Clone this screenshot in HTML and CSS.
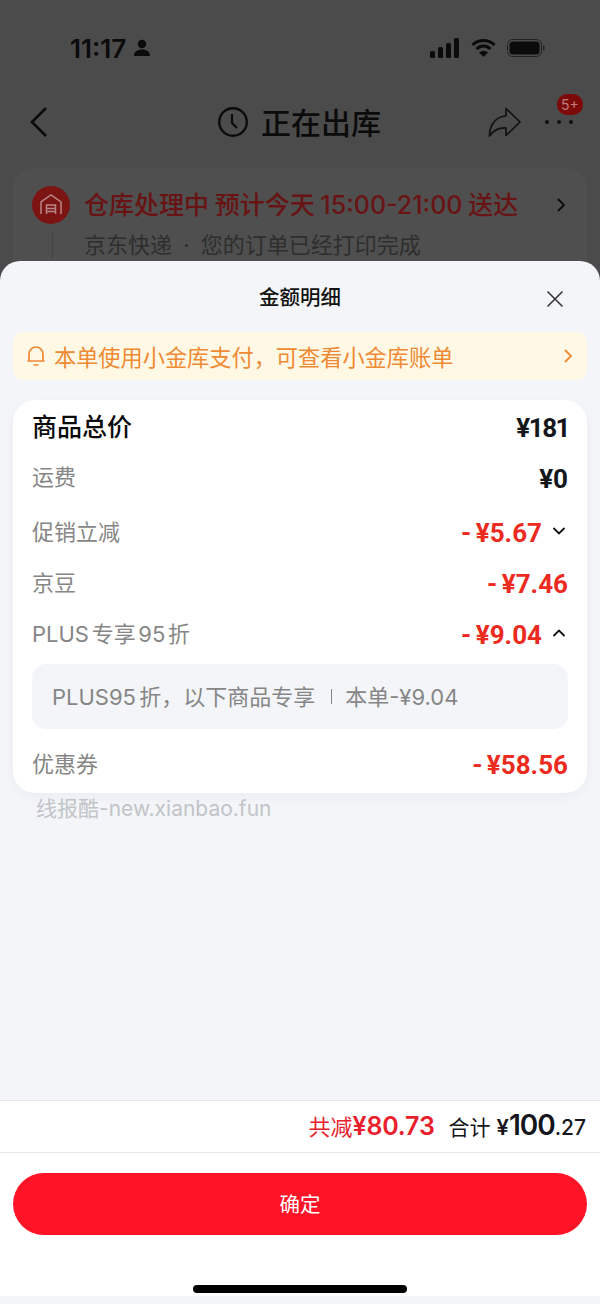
FILE: index.html
```html
<!DOCTYPE html>
<html>

    <head>
        <title>金额明细</title>
        <meta charset="utf-8">
        <link rel="stylesheet" href="styles.css">
    </head>

    <body>
        <div class="backdrop">
            <div class="status-bar">
                <div class="status-left">
                    <span class="time">11:17</span>
                    <svg class="person" width="18" height="18" viewBox="0 0 18 18">
                        <circle cx="9" cy="5" r="4.200" fill="#0b0b0b"/>
                        <path d="M1 17c0-4.600 3.400-6.600 8-6.600s8 2 8 6.600z" fill="#0b0b0b"/>
                    </svg>
                </div>
                <div class="status-right">
                    <svg width="30" height="20" viewBox="0 0 30 20">
                        <rect x="0" y="13" width="5" height="7" rx="1.500" fill="#0b0b0b"/>
                        <rect x="8" y="9" width="5" height="11" rx="1.500" fill="#0b0b0b"/>
                        <rect x="16" y="5" width="5" height="15" rx="1.500" fill="#0b0b0b"/>
                        <rect x="24" y="0" width="5" height="20" rx="1.500" fill="#0b0b0b"/>
                    </svg>
                    <svg width="25" height="20" viewBox="0 0 24 20">
                        <path d="M1 7c6-6 16-6 22 0M5 11c4-4 10-4 14 0" fill="none" stroke="#0b0b0b" stroke-width="3"/>
                        <path d="M12 19l-4.500-4.500c2.500-2 6.500-2 9 0z" fill="#0b0b0b"/>
                    </svg>
                    <svg width="39" height="20" viewBox="0 0 39 20">
                        <rect x="0.500" y="1.500" width="34" height="17" rx="5" fill="none" stroke="#222"/>
                        <rect x="2.500" y="3.500" width="30" height="13" rx="3.500" fill="#0b0b0b"/>
                        <rect x="36" y="7.500" width="1.500" height="5" rx="0.700" fill="#222"/>
                    </svg>
                </div>
            </div>

            <div class="nav">
                <svg class="nav-back" width="20" height="32" viewBox="0 0 20 32">
                    <path d="M17 2L3 16l14 14" fill="none" stroke="#0b0b0b" stroke-width="2.600"/>
                </svg>
                <div class="nav-title">
                    <svg width="32" height="32" viewBox="0 0 32 32">
                        <circle cx="16" cy="16" r="13.800" fill="none" stroke="#0b0b0b" stroke-width="2.400"/>
                        <path d="M15 8v9l5 5" fill="none" stroke="#0b0b0b" stroke-width="2.200"/>
                    </svg>
                    <span>正在出库</span>
                </div>
                <div class="nav-actions">
                    <svg width="34" height="30" viewBox="0 0 34 30">
                        <path d="M18 1.500L32 15 18 28.500V21C11 20.500 5.500 23.500 1.500 29 1.500 18 8 9.500 18 9z" fill="none" stroke="#111" stroke-width="1.700" stroke-linejoin="round"/>
                    </svg>
                    <div class="more">
                        <span class="more-dots"><i></i><i></i><i></i></span>
                        <span class="badge">5+</span>
                    </div>
                </div>
            </div>

            <div class="track-card">
                <div class="track-head">
                    <span class="track-icon">
                        <svg width="26" height="26" viewBox="0 0 26 26">
                            <path d="M3 22V10L13 3l10 7v12M8.500 22v-9h9v9M9 16.500h8M9 19.500h8" fill="none" stroke="#b98686" stroke-width="1.500"/>
                        </svg>
                    </span>
                    <span class="track-title">仓库处理中 预计今天 15:00-21:00 送达</span>
                    <svg class="track-arrow" width="10" height="16" viewBox="0 0 10 16">
                        <path d="M2 2l6 6-6 6" fill="none" stroke="#0b0b0b" stroke-width="1.800"/>
                    </svg>
                </div>
                <div class="track-sub">京东快递 · 您的订单已经打印完成</div>
            </div>
        </div>

        <div class="sheet">
            <div class="sheet-head">
                <span class="sheet-title">金额明细</span>
                <svg class="sheet-close" width="20" height="20" viewBox="0 0 20 20">
                    <path d="M2.500 2.500l15 15M17.500 2.500l-15 15" fill="none" stroke="#333" stroke-width="1.500"/>
                </svg>
            </div>

            <div class="notice">
                <svg width="20" height="22" viewBox="0 0 20 22">
                    <path d="M3 16V9a7 7 0 0 1 14 0v7zM1.500 16h17M7.500 20h5" fill="none" stroke="#ee8a33" stroke-width="1.700" stroke-linejoin="round"/>
                </svg>
                <span class="notice-text">本单使用小金库支付，可查看小金库账单</span>
                <svg class="notice-arrow" width="10" height="16" viewBox="0 0 10 16">
                    <path d="M2 2l6 6-6 6" fill="none" stroke="#ee8a33" stroke-width="1.800"/>
                </svg>
            </div>

            <div class="detail-card">
                <div class="row row-total">
                    <span class="row-name">商品总价</span>
                    <span class="row-amount">¥181</span>
                </div>
                <div class="row row-freight">
                    <span class="row-name">运费</span>
                    <span class="row-amount">¥0</span>
                </div>
                <div class="row row-promo">
                    <span class="row-name">促销立减</span>
                    <span class="row-amount minus">- ¥5.67</span>
                    <svg class="row-toggle" width="14" height="10" viewBox="0 0 14 10">
                        <path d="M1.500 2l5.500 5.500L12.500 2" fill="none" stroke="#111" stroke-width="1.800"/>
                    </svg>
                </div>
                <div class="row">
                    <span class="row-name">京豆</span>
                    <span class="row-amount minus">- ¥7.46</span>
                </div>
                <div class="row">
                    <span class="row-name row-plus">PLUS 专享 95 折</span>
                    <span class="row-amount minus">- ¥9.04</span>
                    <svg class="row-toggle" width="14" height="10" viewBox="0 0 14 10">
                        <path d="M1.500 8L7 2.500 12.500 8" fill="none" stroke="#111" stroke-width="1.800"/>
                    </svg>
                </div>
                <div class="row-extra">
                    <span class="extra-name">PLUS95 折，以下商品专享</span>
                    <i class="extra-sep"></i>
                    <span>本单-¥9.04</span>
                </div>
                <div class="row row-coupon">
                    <span class="row-name">优惠券</span>
                    <span class="row-amount minus">- ¥58.56</span>
                </div>
            </div>

            <div class="watermark">线报酷-new.xianbao.fun</div>

            <div class="summary">
                <span class="saved">共减<b>¥80.73</b></span>
                <span class="total">合计 <em>¥</em><b>100</b><small>.27</small></span>
            </div>

            <div class="footer">
                <button class="confirm">确定</button>
                <div class="home-bar"></div>
            </div>
        </div>
    </body>

</html>
```

FILE: styles.css
```css
* {
    box-sizing: border-box;
}

html,
body {
    margin: 0;
    padding: 0;
}

body {
    width: 600px;
    height: 1304px;
    overflow: hidden;
    background: #4b4b4b;
    font-family: Inter, "Noto Sans CJK SC", sans-serif;
}

/* dimmed order page behind the sheet */
.backdrop {
    height: 261px;
    overflow: hidden;
    color: #0b0b0b;
}

.status-bar {
    display: flex;
    justify-content: space-between;
    align-items: center;
    height: 96px;
    padding: 0 54px 0 70px;
}

.status-left {
    display: flex;
    align-items: center;
    gap: 7px;
}

.time {
    font-size: 26px;
    font-weight: 600;
}

.status-right {
    display: flex;
    align-items: center;
    gap: 11px;
}

.nav {
    display: flex;
    justify-content: space-between;
    align-items: center;
    height: 52px;
    padding: 0 27px 0 29px;
    position: relative;
}

.nav-title {
    position: absolute;
    left: 217px;
    top: 0;
    height: 50px;
    display: flex;
    align-items: center;
    gap: 12px;
    font-size: 30px;
    font-weight: 500;
}

.nav-title svg {
    margin-top: 2px;
}

.nav-actions {
    display: flex;
    align-items: center;
    gap: 23px;
}

.more {
    position: relative;
    width: 28px;
    height: 30px;
    display: flex;
    align-items: center;
}

.more-dots {
    display: flex;
    gap: 8px;
}

.more-dots i {
    width: 4px;
    height: 4px;
    background: #111;
    border-radius: 50%;
}

.badge {
    position: absolute;
    left: 12px;
    top: -13px;
    width: 26px;
    height: 21px;
    border-radius: 10px;
    background: #7c0a0a;
    color: #bf7d7d;
    font-size: 14px;
    line-height: 21px;
    text-align: center;
}

.track-card {
    margin: 20px 13px 0;
    height: 120px;
    padding: 17px 19px;
    background: #4f4f4f;
    border-radius: 20px;
}

.track-head {
    display: flex;
    align-items: center;
    height: 40px;
}

.track-icon {
    width: 38px;
    height: 38px;
    border-radius: 50%;
    background: #7c1414;
    display: flex;
    align-items: center;
    justify-content: center;
    margin-right: 14px;
}

.track-title {
    flex: 1;
    font-size: 25px;
    font-weight: 500;
    line-height: 36px;
    word-spacing: -1px;
    color: #681414;
    white-space: nowrap;
}

.track-arrow {
    margin-right: 2px;
}

/* timeline rule runs down from the status icon */
.track-sub {
    margin: 7px 0 0 20px;
    padding-left: 31px;
    border-left: 1px solid #434343;
    font-size: 22px;
    color: #2e2e2e;
    line-height: 26px;
    word-spacing: 5px;
}

/* the sheet itself */
.sheet {
    position: relative;
    height: 1043px;
    background: #f3f5f9;
    border-radius: 20px 20px 0 0;
    display: flex;
    flex-direction: column;
}

.sheet-head {
    height: 71px;
    display: flex;
    align-items: center;
    justify-content: center;
    padding-bottom: 1px;
}

.sheet-title {
    font-size: 20.500px;
    font-weight: 500;
    color: #111;
}

.sheet-close {
    position: absolute;
    right: 35px;
    top: 28px;
}

.notice {
    margin: 0 13px;
    height: 48px;
    padding: 0 14px 0 13px;
    display: flex;
    align-items: center;
    gap: 8px;
    background: #fff8e5;
    border-radius: 10px;
    color: #ee8a33;
}

.notice-text {
    flex: 1;
    font-size: 22.200px;
}

.detail-card {
    margin: 20px 13px 0;
    height: 393px;
    padding: 2px 19px 0;
    background: #fff;
    border-radius: 22px;
    box-shadow: 0 4px 12px rgba(30, 40, 70, 0.04);
}

.row {
    display: flex;
    align-items: center;
    height: 50px;
    margin-top: 1px;
}

.row-name {
    flex: 1;
    font-size: 22px;
    color: #868686;
    padding-bottom: 4px;
}

.row-plus {
    word-spacing: -3.500px;
}

.row-amount {
    font-family: Roboto, sans-serif;
    font-size: 26px;
    font-weight: 700;
    color: #14161c;
    padding-top: 2px;
}

.row-amount.minus {
    color: #ec2a1e;
    word-spacing: -2px;
}

.row-toggle {
    margin: -2px 2px 0 10px;
}

.row-total {
    margin-top: 0;
}

.row-total .row-name {
    font-size: 25px;
    font-weight: 500;
    color: #0b0b0b;
    padding-bottom: 5px;
}

.row-total .row-amount {
    letter-spacing: -1.500px;
    margin-right: -1px;
}

.row-freight .row-name {
    padding-bottom: 6px;
}

.row-promo {
    margin-top: 4px;
}

.row-extra {
    height: 65px;
    margin-top: 5px;
    padding: 0 20px 3px;
    display: flex;
    align-items: center;
    background: #f3f5f9;
    border-radius: 14px;
    font-size: 22px;
    color: #868686;
}

.extra-name {
    word-spacing: -3px;
}

.extra-sep {
    width: 1px;
    height: 15px;
    margin: 3px 13px 0 16px;
    background: #868686;
}

.row-coupon {
    margin-top: 10px;
}

.watermark {
    margin: 2px 0 0 36px;
    font-size: 21px;
    line-height: 28px;
    color: #c2c4c8;
}

.summary {
    margin-top: auto;
    height: 53px;
    flex-shrink: 0;
    display: flex;
    justify-content: flex-end;
    align-items: center;
    gap: 14px;
    padding: 0 14px 3px;
    background: #fff;
    border-top: 1px solid #e6e7ea;
    border-bottom: 1px solid #e6e7ea;
}

.saved {
    font-size: 22px;
    color: #e8202c;
}

.saved b {
    font-size: 25px;
    font-weight: 600;
    letter-spacing: -0.200px;
}

.total {
    font-size: 21px;
    color: #14161c;
}

.total em {
    font-style: normal;
    font-size: 22px;
    font-weight: 600;
}

.total b {
    font-size: 28px;
    font-weight: 600;
    letter-spacing: -1px;
}

.total small {
    font-size: 21px;
    font-weight: 500;
}

.footer {
    height: 143px;
    flex-shrink: 0;
    margin-bottom: 8px;
    padding: 20px 13px 0;
    background: #fff;
    display: flex;
    flex-direction: column;
    align-items: center;
}

.confirm {
    width: 100%;
    height: 62px;
    flex-shrink: 0;
    border: none;
    border-radius: 31px;
    background: #fe1427;
    color: #fff;
    font-family: inherit;
    font-size: 20.500px;
    padding-bottom: 3px;
}

.home-bar {
    width: 214px;
    height: 8px;
    flex-shrink: 0;
    margin-top: 50px;
    border-radius: 4px;
    background: #000;
}
```
